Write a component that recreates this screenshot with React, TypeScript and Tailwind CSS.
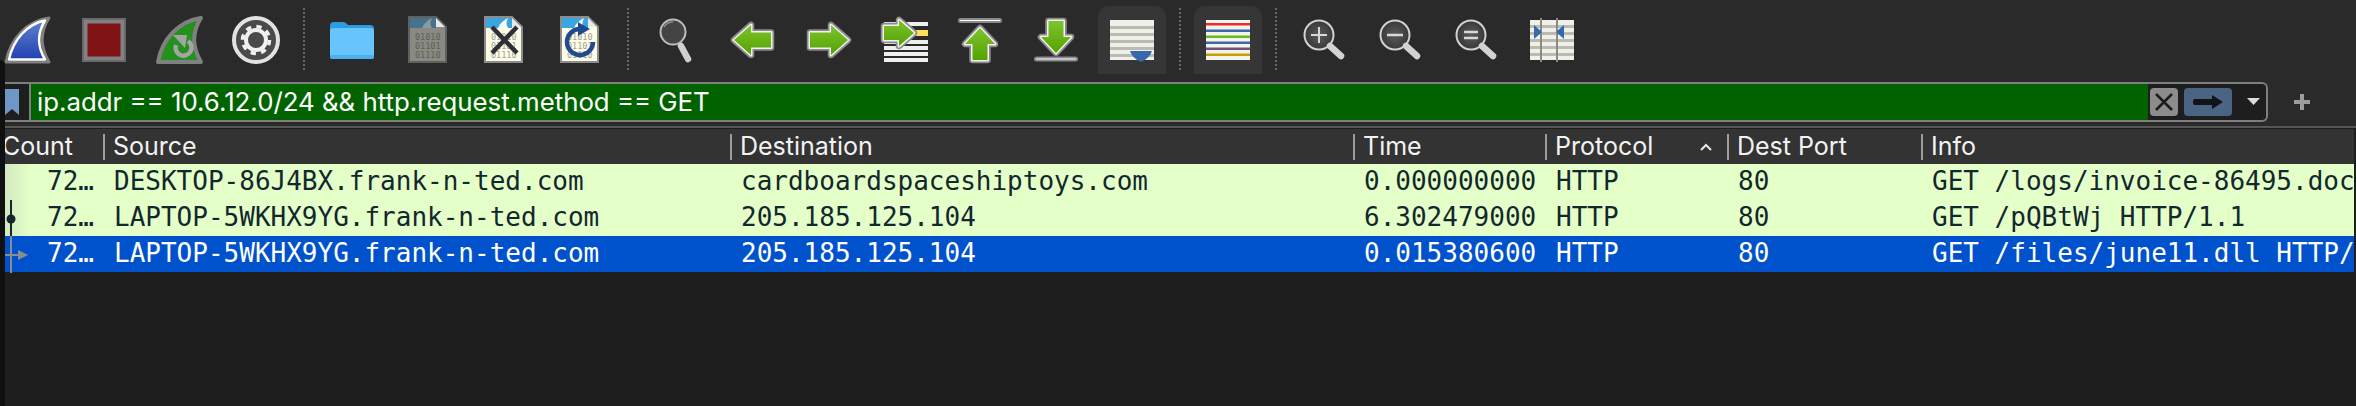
import React from "react";

const mono = { fontFamily: '"DejaVu Sans Mono", monospace' };

function Icon({ c, children }: { c: number; children?: React.ReactNode }) {
  return (
    <svg width={76} height={82} viewBox={`${c - 38} 0 76 82`} className="shrink-0 block">
      {children}
    </svg>
  );
}

function Sep() {
  return (
    <div className="w-[20px] h-[82px] shrink-0 flex justify-center pt-[8px]">
      <div className="w-[2px] h-[62px] border-l-2 border-dotted border-[#666666]" />
    </div>
  );
}

function Layered({ d }: { d: string }) {
  return (
    <g strokeLinejoin="round">
      <path d={d} fill="none" stroke="#8a8a8a" strokeWidth={6.5} />
      <path d={d} fill="none" stroke="#f2f2f2" strokeWidth={3} />
      <path d={d} fill="url(#arrowGreen)" />
    </g>
  );
}

function Stripes({ x, w, ys, color }: { x: number; w: number; ys: number[]; color: string }) {
  return (
    <g>
      {ys.map((y) => (
        <rect key={y} x={x} y={y} width={w} height={3} fill={color} />
      ))}
    </g>
  );
}

function FileBits({ x, fill }: { x: number; fill: string }) {
  return (
    <g fontFamily='"DejaVu Sans Mono", monospace' fontSize={8.5} fill={fill}>
      <text x={x} y={40}>01010</text>
      <text x={x} y={49}>01101</text>
      <text x={x} y={58}>01110</text>
    </g>
  );
}

function Page({ x, page, band, fin, border }: { x: number; page: string; band: string; fin: string; border: string }) {
  return (
    <g>
      <path d={`M${x + 1} 17H${x + 28}L${x + 38} 27V62H${x + 1}Z`} fill={page} stroke={border} strokeWidth={2} />
      <path d={`M${x + 2} 18H${x + 28}V28H${x + 2}Z`} fill={band} />
      <path d={`M${x + 14} 28C${x + 16} 23 ${x + 20} 20 ${x + 24} 18C${x + 22} 22 ${x + 22} 25 ${x + 24} 28Z`} fill={fin} />
      <path d={`M${x + 28} 18V27H${x + 37}Z`} fill="#e8e8e8" />
    </g>
  );
}

function Loupe({ cx, children }: { cx: number; children?: React.ReactNode }) {
  return (
    <g>
      <circle cx={cx} cy={35} r={14.5} fill="url(#loupeFill)" stroke="#d2d2d2" strokeWidth={2} />
      <line x1={cx + 11} y1={46} x2={cx + 22} y2={56} stroke="#d2d2d2" strokeWidth={6.5} strokeLinecap="round" />
      {children}
    </g>
  );
}

function Toolbar() {
  return (
    <div className="flex h-[82px] shrink-0 -ml-[10px]">
      <Icon c={28}>
        <defs>
          <linearGradient id="arrowGreen" x1="0" y1="0" x2="0" y2="1">
            <stop offset="0" stopColor="#80c22f" />
            <stop offset="1" stopColor="#52a400" />
          </linearGradient>
          <linearGradient id="sharkBlue" x1="0" y1="0" x2="0" y2="1">
            <stop offset="0" stopColor="#5f82d0" />
            <stop offset="1" stopColor="#2140b0" />
          </linearGradient>
          <radialGradient id="loupeFill">
            <stop offset="0" stopColor="#5c5c5c" />
            <stop offset="1" stopColor="#383838" />
          </radialGradient>
        </defs>
        <path d="M49 18C27 21 10 39 6 62H49C40 47 40 32 49 18Z" fill="none" stroke="#808080" strokeWidth={3} strokeLinejoin="round" />
        <path d="M45 20.500C27 24 13 40 9 59.500H45C37 46 38 32 45 20.500Z" fill="url(#sharkBlue)" stroke="#ffffff" strokeWidth={2.500} strokeLinejoin="round" />
      </Icon>
      <Icon c={104}>
        <rect x={83} y={19} width={42} height={42} fill="#818181" stroke="#6a6a6a" strokeWidth={2} />
        <rect x={87.500} y={23.500} width={33} height={33} fill="#811414" />
      </Icon>
      <Icon c={180}>
        <path d="M201 18C179 21 162 39 158 62H201C192 47 192 32 201 18Z" fill="#24901e" stroke="#808080" strokeWidth={4} strokeLinejoin="round" />
        <path d="M176 45A8 8 0 1 0 188 41" fill="none" stroke="#a4a4a4" strokeWidth={4.500} />
        <path d="M173 35L187 35L185 48Z" fill="#a4a4a4" />
      </Icon>
      <Icon c={256}>
        <circle cx={256} cy={40} r={22} fill="#4a4a4a" stroke="#e2e2e2" strokeWidth={4} />
        <circle cx={256} cy={40} r={10} fill="none" stroke="#f0f0f0" strokeWidth={4} />
        <circle cx={256} cy={40} r={13.500} fill="none" stroke="#f0f0f0" strokeWidth={3.500} strokeDasharray="5.300 5.300" />
      </Icon>
      <Sep />
      <Icon c={352}>
        <path d="M330 30V26Q330 22 334 22H343Q346 22 348 25H370Q374 25 374 29V34H330Z" fill="#2d9be4" />
        <rect x={330} y={28} width={44} height={31} rx={3} fill="#68c5fb" />
        <rect x={330} y={55} width={44} height={4} rx={2} fill="#4cb0ee" />
      </Icon>
      <Icon c={428}>
        <Page x={408} page="#8a8a82" band="#44738e" fin="#8a9aa2" border="#606060" />
        <FileBits x={415} fill="#5e5e58" />
      </Icon>
      <Icon c={504}>
        <Page x={484} page="#fdfce6" band="#3aa5e0" fin="#ffffff" border="#8c8c8c" />
        <FileBits x={491} fill="#a0a096" />
        <path d="M492 27L517 53M517 27L492 53" stroke="#2c2f33" strokeWidth={4.500} />
      </Icon>
      <Icon c={580}>
        <Page x={560} page="#fdfce6" band="#3aa5e0" fin="#ffffff" border="#8c8c8c" />
        <FileBits x={567} fill="#a0a096" />
        <path d="M593 42A13 13 0 1 1 580 29" fill="none" stroke="#1f4b8e" strokeWidth={4.500} />
        <path d="M578 22L590 29L578 36Z" fill="#1f4b8e" />
      </Icon>
      <Sep />
      <Icon c={676}>
        <circle cx={673} cy={32} r={12.500} fill="#444444" stroke="#bdbdbd" strokeWidth={2} />
        <path d="M664 27Q667 22 673 22" fill="none" stroke="#8a8a8a" strokeWidth={1.500} />
        <line x1={681} y1={46} x2={688} y2={59} stroke="#cfcfcf" strokeWidth={6.500} strokeLinecap="round" />
      </Icon>
      <Icon c={752}>
        <Layered d="M734 40L751 25V32.500H771V47.500H751V55Z" />
      </Icon>
      <Icon c={828}>
        <Layered d="M848 40L831 25V32.500H810V47.500H831V55Z" />
      </Icon>
      <Icon c={904}>
        {[22, 40, 46, 52, 58].map((y) => (
          <rect key={y} x={884} y={y} width={44} height={4} fill="#efefef" />
        ))}
        <rect x={884} y={30} width={44} height={6} fill="#efefef" />
        <rect x={905} y={30} width={23} height={6} fill="#ffdf5a" />
        <Layered d="M914 33L899 20V26H884V40H899V46Z" />
      </Icon>
      <Icon c={980}>
        <rect x={959} y={19} width={42} height={3} rx={1.500} fill="#ffffff" stroke="#8a8a8a" strokeWidth={2} />
        <Layered d="M980 28L965 44H972.500V60H987.500V44H995Z" />
      </Icon>
      <Icon c={1056}>
        <Layered d="M1056 53L1041 37H1048.500V21H1063.500V37H1071Z" />
        <rect x={1035} y={57.500} width={42} height={3} rx={1.500} fill="#ffffff" stroke="#8a8a8a" strokeWidth={2} />
      </Icon>
      <div className="w-[76px] h-[82px] shrink-0 pt-[6px] px-[4px]">
        <div className="h-[68px] bg-[#363636] rounded-t-[10px]">
          <svg width={68} height={68} viewBox="1098 6 68 68" className="block">
            <rect x={1110} y={20} width={44} height={40} fill="#f0f0ea" />
            <Stripes x={1110} w={44} ys={[26, 33, 40, 47, 54]} color="#bbbbb1" />
            <path d="M1130 51H1152Q1150 58 1141 62Q1132 58 1130 51Z" fill="#3768ab" />
          </svg>
        </div>
      </div>
      <Sep />
      <div className="w-[76px] h-[82px] shrink-0 pt-[6px] px-[4px]">
        <div className="h-[68px] bg-[#363636] rounded-t-[10px]">
          <svg width={68} height={68} viewBox="1194 6 68 68" className="block">
            <rect x={1206} y={20} width={44} height={40} fill="#f4f4ee" />
            <rect x={1206} y={23} width={44} height={2.500} fill="#f02c2c" />
            <rect x={1206} y={29.500} width={44} height={2.500} fill="#3b67a8" />
            <rect x={1206} y={35.500} width={44} height={2.500} fill="#6fb81c" />
            <rect x={1206} y={41.500} width={44} height={2.500} fill="#3b67a8" />
            <rect x={1206} y={47.500} width={44} height={2.500} fill="#75507b" />
            <rect x={1206} y={53.500} width={44} height={2.500} fill="#c4a000" />
          </svg>
        </div>
      </div>
      <Sep />
      <Icon c={1324}>
        <Loupe cx={1319}>
          <path d="M1319 27V43M1311 35H1327" stroke="#d8d8d8" strokeWidth={2} />
        </Loupe>
      </Icon>
      <Icon c={1400}>
        <Loupe cx={1395}>
          <path d="M1387 35H1403" stroke="#d8d8d8" strokeWidth={2.500} />
        </Loupe>
      </Icon>
      <Icon c={1476}>
        <Loupe cx={1471}>
          <path d="M1464 32H1478M1464 38H1478" stroke="#d8d8d8" strokeWidth={2.500} />
        </Loupe>
      </Icon>
      <Icon c={1552}>
        <rect x={1530} y={20} width={44} height={40} fill="#f0f0ea" />
        <Stripes x={1530} w={44} ys={[25, 32, 39, 46, 53]} color="#bbbbb1" />
        <rect x={1540} y={18} width={2} height={44} fill="#8a8a84" />
        <rect x={1556} y={18} width={2} height={44} fill="#8a8a84" />
        <path d="M1534 25L1542 32L1534 39Z" fill="#3768ab" />
        <path d="M1564 25L1556 32L1564 39Z" fill="#3768ab" />
      </Icon>
    </div>
  );
}

function FilterBar() {
  return (
    <div className="flex h-[40px] shrink-0 items-stretch">
      <div className="ml-[5px] w-[2263px] flex border-y-2 border-r-2 border-[#7e7e7e] rounded-r-[6px] overflow-hidden bg-[#1e1e1e]">
        <div className="w-[24px] shrink-0 border-r-2 border-transparent flex items-center">
          <svg width={14} height={26} viewBox="0 0 14 26" className="block">
            <path d="M0 0H14V26L7 20L0 26Z" fill="#6f97c6" />
          </svg>
        </div>
        <div className="w-[2px] shrink-0 bg-[#7e7e7e]" />
        <div
          className="w-[2117px] shrink-0 bg-[#006300] text-white text-[25.8px] leading-[36px] pl-[6px] whitespace-nowrap"
          style={{ fontFamily: 'Inter, sans-serif' }}
        >
          ip.addr == 10.6.12.0/24 &amp;&amp; http.request.method == GET
        </div>
        <div className="flex items-center pl-[2px] gap-[6px]">
          <div className="w-[28px] h-[28px] rounded-[4px] bg-[#8c8c8c] flex items-center justify-center">
            <svg width={20} height={20} viewBox="0 0 20 20">
              <path d="M2 2L18 18M18 2L2 18" stroke="#1c1c1c" strokeWidth={2.500} />
            </svg>
          </div>
          <div className="w-[48px] h-[28px] rounded-[4px] bg-[#4a6484] flex items-center justify-center">
            <svg width={32} height={16} viewBox="0 0 32 16">
              <path d="M2 5H20V1L31 8L20 15V11H2Q0 8 2 5Z" fill="#101418" />
            </svg>
          </div>
          <svg width={44} height={10} viewBox="0 0 44 10">
            <path d="M9 1H22L15.500 8Z" fill="#dcdcdc" />
          </svg>
        </div>
      </div>
      <div className="w-[68px] flex items-center justify-center">
        <svg width={16} height={16} viewBox="0 0 16 16">
          <path d="M8 0V16M0 8H16" stroke="#9c9c9c" strokeWidth={4} />
        </svg>
      </div>
    </div>
  );
}

const cols = [
  { name: "Count", w: "w-[98px]" },
  { name: "Source", w: "w-[627px]" },
  { name: "Destination", w: "w-[623px]" },
  { name: "Time", w: "w-[192px]" },
  { name: "Protocol", w: "w-[182px]" },
  { name: "Dest Port", w: "w-[194px]" },
  { name: "Info", w: "flex-1 min-w-0" },
];

const rows = [
  ["72…", "DESKTOP-86J4BX.frank-n-ted.com", "cardboardspaceshiptoys.com", "0.000000000", "HTTP", "80", "GET /logs/invoice-86495.doc HTTP/1.1"],
  ["72…", "LAPTOP-5WKHX9YG.frank-n-ted.com", "205.185.125.104", "6.302479000", "HTTP", "80", "GET /pQBtWj HTTP/1.1"],
  ["72…", "LAPTOP-5WKHX9YG.frank-n-ted.com", "205.185.125.104", "0.015380600", "HTTP", "80", "GET /files/june11.dll HTTP/1.1"],
];

function Header() {
  return (
    <div
      className="flex h-[35px] shrink-0 bg-[#333333] text-[#f2f2f2] text-[25px] mr-[2px]"
      style={{ fontFamily: 'Inter, sans-serif' }}
    >
      {cols.map((c, i) => (
        <div key={c.name} className={`${c.w} shrink-0 flex items-center overflow-hidden`}>
          {i > 0 && <div className="w-[2px] h-[26px] bg-[#9c9c9c] shrink-0" />}
          <span className={i === 0 ? "-ml-[3px]" : "ml-[8px]"}>{c.name}</span>
          {c.name === "Protocol" && (
            <svg width={12} height={8} viewBox="0 0 12 8" className="ml-auto mr-[15px]">
              <path d="M1 7L6 2L11 7" fill="none" stroke="#e8e8e8" strokeWidth={2} />
            </svg>
          )}
        </div>
      ))}
    </div>
  );
}

function Row({ cells, selected }: { cells: string[]; selected: boolean }) {
  return (
    <div
      className={`flex h-[36px] shrink-0 mr-[2px] text-[26px] leading-[34px] whitespace-nowrap ${
        selected ? "bg-[#0052cc] text-white" : "bg-[#e4ffc7] text-[#12272e]"
      }`}
      style={mono}
    >
      {cells.map((t, i) => (
        <div
          key={i}
          className={`${cols[i].w} shrink-0 overflow-hidden ${
            i === 0 ? `pl-[42px] ${selected ? "" : "bg-linear-to-r from-[#d4e8bf] to-[#e4ffc7] to-[25%]"}` : "pl-[11px]"
          }`}
        >
          {t}
        </div>
      ))}
    </div>
  );
}

export default function App() {
  return (
    <div className="relative w-[2356px] h-[406px] overflow-hidden bg-[#1e1e1e] flex flex-col">
      <div className="bg-[#2a2a2a] shrink-0 overflow-hidden">
        <Toolbar />
        <FilterBar />
        <div className="h-[4px] bg-[#2a2a2a]" />
        <div className="h-[2px] bg-[#565656]" />
        <div className="h-[1px] bg-[#1e1e1e]" />
      </div>
      <div className="pl-[5px] flex flex-col">
        <Header />
        {rows.map((r, i) => (
          <Row key={i} cells={r} selected={i === 2} />
        ))}
      </div>
      <div className="absolute left-0 top-[60px] bottom-0 w-[5px] bg-[#101010] rounded-tr-[6px]" />
      <svg width={30} height={74} viewBox="0 0 30 74" className="absolute left-0 top-[200px]">
        <rect x={10} y={0} width={2} height={36} fill="#12272e" />
        <circle cx={11} cy={19} r={4.500} fill="#12272e" />
        <rect x={10} y={36} width={2} height={37} fill="#8c8c8c" />
        <rect x={5} y={54} width={14} height={2} fill="#8c8c8c" />
        <path d="M18 50L28 55L18 60Z" fill="#8c8c8c" />
      </svg>
    </div>
  );
}
